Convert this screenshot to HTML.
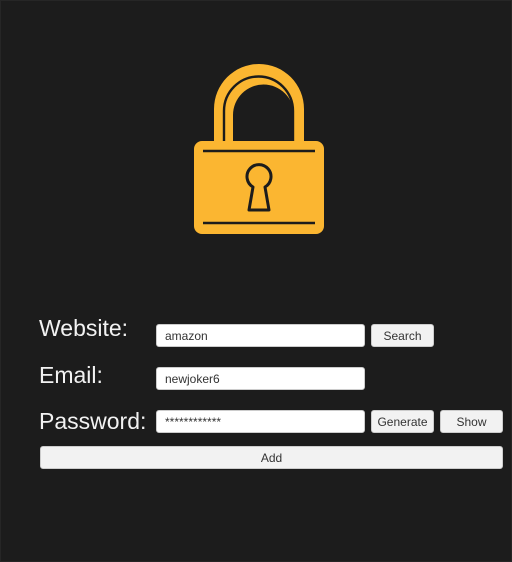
<!DOCTYPE html>
<html><head><style>
html,body{margin:0;padding:0;}
body{width:512px;height:562px;background:#1c1c1c;position:relative;overflow:hidden;font-family:"Liberation Sans",sans-serif;box-shadow:inset 0 0 0 1px #262626;}
.l{position:absolute;color:#f2f2f2;font-size:23px;line-height:1;}
.in{position:absolute;background:#fff;border:1px solid #ccc;border-radius:3px;box-sizing:border-box;font-size:12px;color:#333;padding-left:8px;display:flex;align-items:center;}
.b{position:absolute;background:#f2f2f2;border:1px solid #ccc;border-radius:3px;box-sizing:border-box;font-size:12px;color:#333;display:flex;align-items:center;justify-content:center;}
</style></head><body>
<svg style="position:absolute;left:0;top:0" width="512" height="300">
<path d="M214 141 V109 A45 45 0 0 1 304 109 V141 H294 V115 A30.5 30.5 0 0 0 233 115 V141 Z" fill="#fbb631"/>
<path d="M224 146 V111 A34.5 34.5 0 0 1 293 111 V146" fill="none" stroke="#1c1c1c" stroke-width="2.4"/>
<rect x="194" y="141" width="130" height="93" rx="8" fill="#fbb631"/>
<line x1="203" y1="151" x2="315" y2="151" stroke="#1c1c1c" stroke-width="2.4"/>
<line x1="203" y1="223" x2="315" y2="223" stroke="#1c1c1c" stroke-width="2.4"/>
<path d="M253 187 A12 12 0 1 1 265 187 L269 210 H249 Z" fill="none" stroke="#1c1c1c" stroke-width="3" stroke-linejoin="round"/>
</svg>
<div class="l" style="left:39px;top:317px">Website:</div>
<div class="l" style="left:39px;top:364px">Email:</div>
<div class="l" style="left:39px;top:410px">Password:</div>
<div class="in" style="left:156px;top:324px;width:209px;height:23px">amazon</div>
<div class="b" style="left:371px;top:324px;width:63px;height:23px">Search</div>
<div class="in" style="left:156px;top:367px;width:209px;height:23px">newjoker6</div>
<div class="in" style="left:156px;top:410px;width:209px;height:23px">************</div>
<div class="b" style="left:371px;top:410px;width:63px;height:23px">Generate</div>
<div class="b" style="left:440px;top:410px;width:63px;height:23px">Show</div>
<div class="b" style="left:40px;top:446px;width:463px;height:23px">Add</div>
</body></html>
